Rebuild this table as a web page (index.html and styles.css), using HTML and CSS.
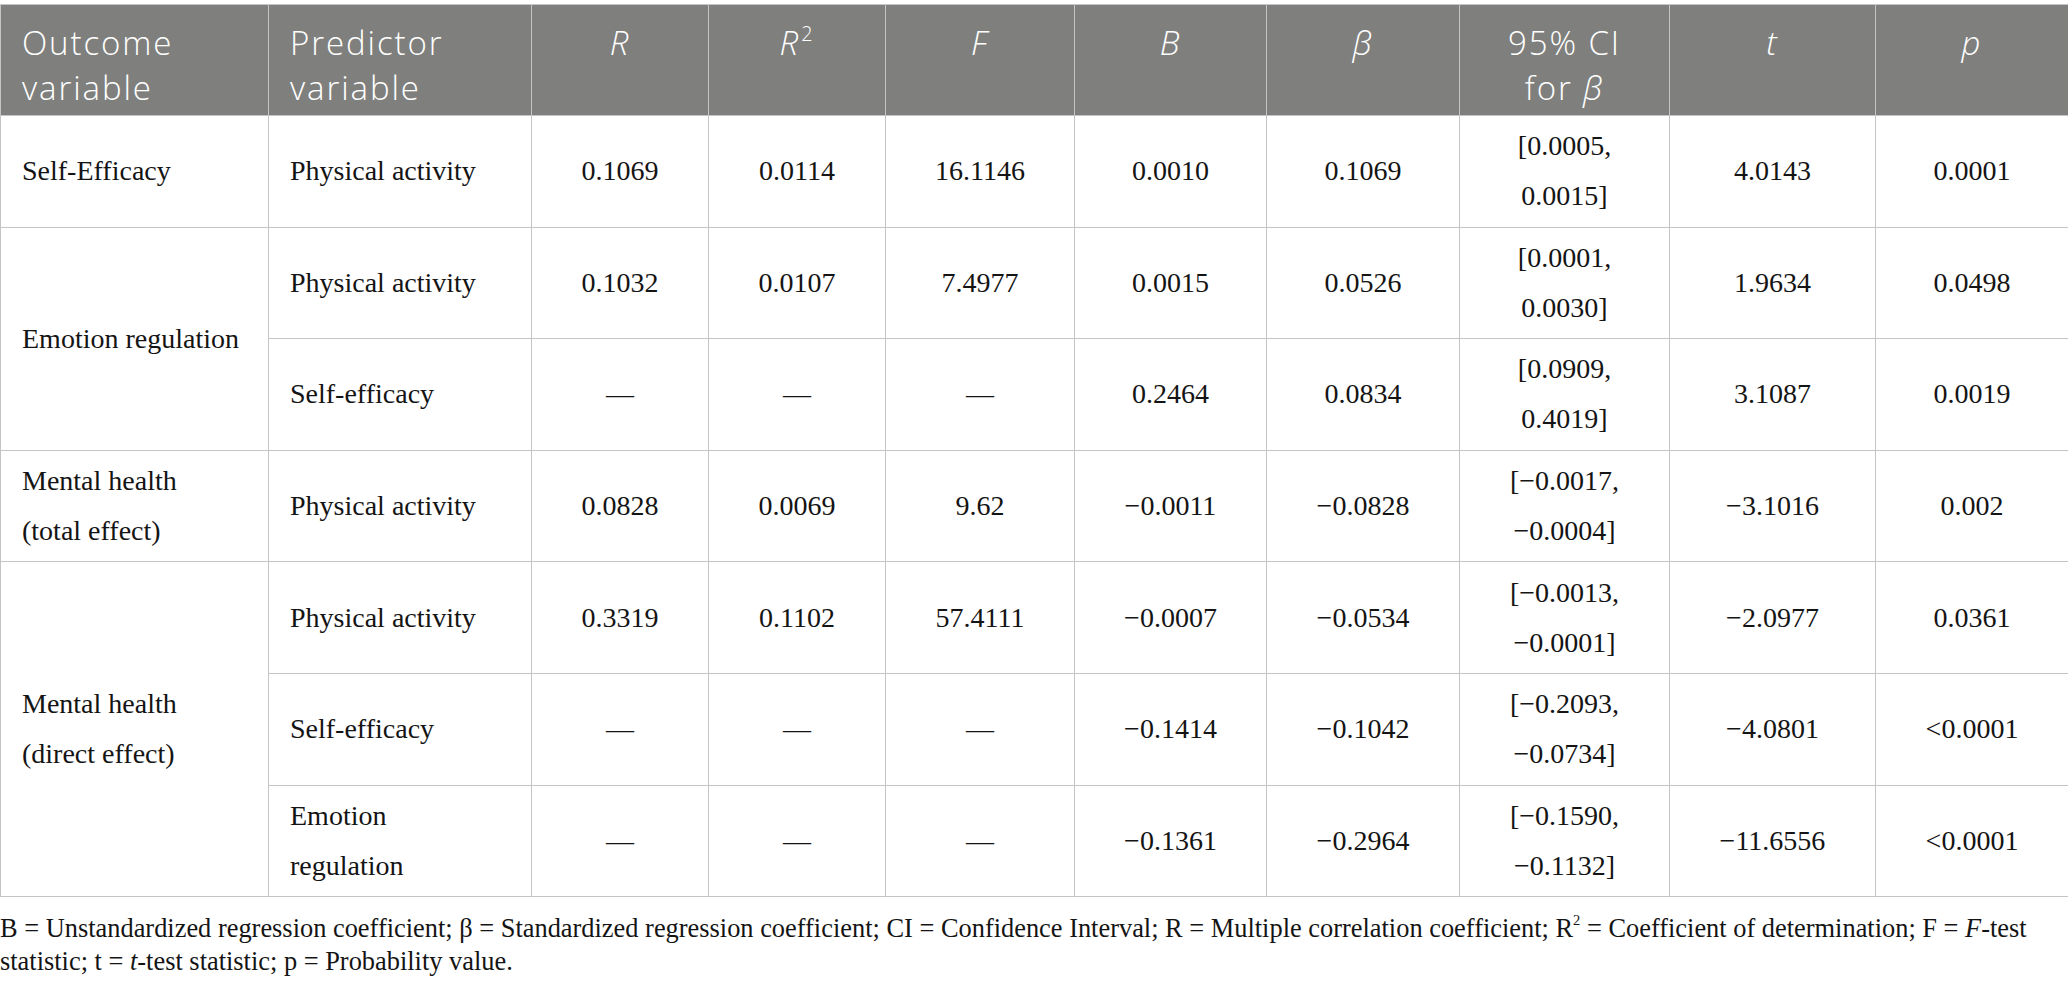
FILE: index.html
```html
<!DOCTYPE html>
<html lang="en">
<head>
<meta charset="utf-8">
<title>Regression table</title>
<link rel="stylesheet" href="styles.css">
</head>
<body>
<div class="page">
  <table class="reg">
    <colgroup>
      <col class="c1"><col class="c2"><col class="c3"><col class="c4"><col class="c5">
      <col class="c6"><col class="c7"><col class="c8"><col class="c9"><col class="c10">
    </colgroup>
    <thead>
      <tr class="head">
        <th class="left">Outcome<br>variable</th>
        <th class="left">Predictor<br>variable</th>
        <th><i>R</i></th>
        <th><i>R</i><sup>2</sup></th>
        <th><i>F</i></th>
        <th><i>B</i></th>
        <th><i>β</i></th>
        <th>95% CI<br>for <i>β</i></th>
        <th><i>t</i></th>
        <th><i>p</i></th>
      </tr>
    </thead>
    <tbody>
      <tr>
        <td class="left">Self-Efficacy</td>
        <td class="left">Physical activity</td>
        <td>0.1069</td><td>0.0114</td><td>16.1146</td><td>0.0010</td><td>0.1069</td>
        <td>[0.0005,<br>0.0015]</td><td>4.0143</td><td>0.0001</td>
      </tr>
      <tr>
        <td class="left" rowspan="2">Emotion regulation</td>
        <td class="left">Physical activity</td>
        <td>0.1032</td><td>0.0107</td><td>7.4977</td><td>0.0015</td><td>0.0526</td>
        <td>[0.0001,<br>0.0030]</td><td>1.9634</td><td>0.0498</td>
      </tr>
      <tr>
        <td class="left">Self-efficacy</td>
        <td>—</td><td>—</td><td>—</td><td>0.2464</td><td>0.0834</td>
        <td>[0.0909,<br>0.4019]</td><td>3.1087</td><td>0.0019</td>
      </tr>
      <tr>
        <td class="left">Mental health<br>(total effect)</td>
        <td class="left">Physical activity</td>
        <td>0.0828</td><td>0.0069</td><td>9.62</td><td>−0.0011</td><td>−0.0828</td>
        <td>[−0.0017,<br>−0.0004]</td><td>−3.1016</td><td>0.002</td>
      </tr>
      <tr>
        <td class="left" rowspan="3">Mental health<br>(direct effect)</td>
        <td class="left">Physical activity</td>
        <td>0.3319</td><td>0.1102</td><td>57.4111</td><td>−0.0007</td><td>−0.0534</td>
        <td>[−0.0013,<br>−0.0001]</td><td>−2.0977</td><td>0.0361</td>
      </tr>
      <tr>
        <td class="left">Self-efficacy</td>
        <td>—</td><td>—</td><td>—</td><td>−0.1414</td><td>−0.1042</td>
        <td>[−0.2093,<br>−0.0734]</td><td>−4.0801</td><td>&lt;0.0001</td>
      </tr>
      <tr>
        <td class="left">Emotion<br>regulation</td>
        <td>—</td><td>—</td><td>—</td><td>−0.1361</td><td>−0.2964</td>
        <td>[−0.1590,<br>−0.1132]</td><td>−11.6556</td><td>&lt;0.0001</td>
      </tr>
    </tbody>
  </table>
  <p class="note">B = Unstandardized regression coefficient; β = Standardized regression coefficient; CI = Confidence Interval; R = Multiple correlation coefficient; R<sup>2</sup> = Coefficient of determination; F = <i>F</i>-test<br>statistic; t = <i>t</i>-test statistic; p = Probability value.</p>
</div>
</body>
</html>
```
FILE: styles.css
```css
html, body {
  margin: 0;
  padding: 0;
  background: #ffffff;
}

.page {
  padding-top: 4px;
  width: 2068px;
}

.reg {
  width: 2068px;
  border-collapse: collapse;
  table-layout: fixed;
  font-family: "Liberation Serif", "Times New Roman", serif;
  font-size: 28px;
  color: #141414;
}

.c1 { width: 268px; }
.c2 { width: 263px; }
.c3 { width: 177px; }
.c4 { width: 177px; }
.c5 { width: 189px; }
.c6 { width: 192px; }
.c7 { width: 193px; }
.c8 { width: 210px; }
.c9 { width: 206px; }
.c10 { width: 193px; }

.reg th,
.reg td {
  border: 1px solid #c4c4c4;
  padding: 0 21px;
  text-align: center;
  white-space: nowrap;
}

.head {
  height: 111px;
}

.reg th {
  background: #7f807e;
  color: #ffffff;
  font-family: "Open Sans", "DejaVu Sans", sans-serif;
  font-weight: 300;
  font-size: 33px;
  letter-spacing: 1.9px;
  line-height: 45px;
  vertical-align: top;
  padding-top: 15px;
}

.reg th sup {
  font-size: 0.6em;
  line-height: 0;
  vertical-align: 0.7em;
  margin-left: 1px;
}

.reg tbody tr {
  height: 111.6px;
}

.reg td {
  vertical-align: middle;
  line-height: 50px;
}

.reg .left {
  text-align: left;
}

.note {
  margin: 15px 0 0 0;
  font-family: "Liberation Serif", "Times New Roman", serif;
  font-size: 26.4px;
  line-height: 33px;
  color: #141414;
  white-space: nowrap;
}

.note sup {
  font-size: 0.55em;
  line-height: 0;
  vertical-align: 0.8em;
}
```
